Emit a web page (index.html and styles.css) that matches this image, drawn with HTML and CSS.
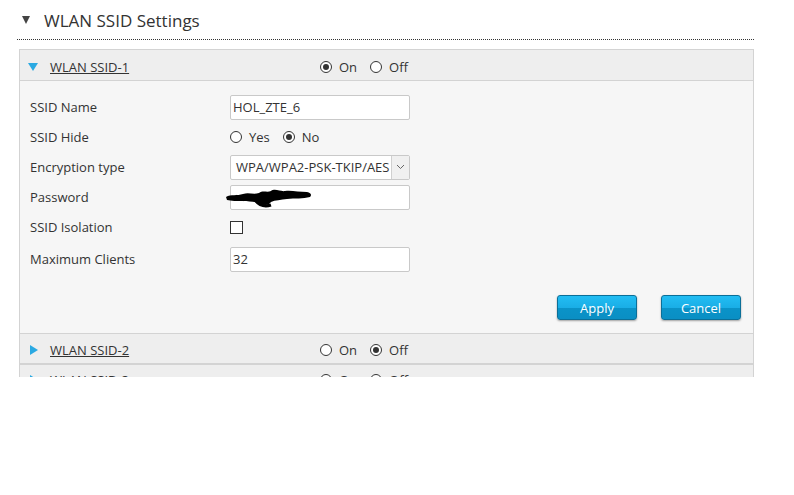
FILE: index.html
```html
<!DOCTYPE html>
<html>
<head>
<meta charset="utf-8">
<link rel="stylesheet" href="styles.css">
</head>
<body>
<div class="page">
  <div class="title">
    <span class="tri-down dark"></span>
    <span class="title-text">WLAN SSID Settings</span>
  </div>
  <div class="box">
    <div class="hdr">
      <span class="tri-down blue"></span>
      <a class="hdr-link">WLAN SSID-1</a>
      <div class="radios hdr-radios">
        <span class="radio on"></span><span class="rlabel">On</span>
        <span class="radio"></span><span class="rlabel">Off</span>
      </div>
    </div>
    <div class="content">
      <div class="row">
        <span class="label">SSID Name</span>
        <div class="field"><div class="input">HOL_ZTE_6</div></div>
      </div>
      <div class="row">
        <span class="label">SSID Hide</span>
        <div class="field radios">
          <span class="radio"></span><span class="rlabel">Yes</span>
          <span class="radio on"></span><span class="rlabel">No</span>
        </div>
      </div>
      <div class="row">
        <span class="label">Encryption type</span>
        <div class="field">
          <div class="select">
            <span class="sel-text">WPA/WPA2-PSK-TKIP/AES</span>
            <span class="sel-arrow"><svg width="9" height="6" viewBox="0 0 9 6"><path d="M1 1 L4.5 4.5 L8 1" fill="none" stroke="#666" stroke-width="1"/></svg></span>
          </div>
        </div>
      </div>
      <div class="row">
        <span class="label">Password</span>
        <div class="field pw">
          <div class="input"></div>
          <svg class="scribble" width="90" height="26" viewBox="0 0 90 26"><path d="M1 12 C6 9 12 11 18 9 C24 7 28 10 34 8 C38 5 42 8 46 6 C50 3 56 7 60 6 C66 5 74 7 82 7 C86 8 87 10 85 12 C78 14 70 13 62 14 C56 15 50 15 46 17 C44 20 40 21 36 19 C30 16 24 17 18 16 C12 16 6 16 2 15 Z" fill="#000"/><path d="M30 15 C34 20 40 22 46 20" stroke="#000" stroke-width="3" fill="none"/></svg>
        </div>
      </div>
      <div class="row">
        <span class="label">SSID Isolation</span>
        <div class="field"><span class="checkbox"></span></div>
      </div>
      <div class="row last">
        <span class="label">Maximum Clients</span>
        <div class="field"><div class="input">32</div></div>
      </div>
      <div class="buttons">
        <button class="btn">Apply</button>
        <button class="btn">Cancel</button>
      </div>
    </div>
    <div class="hdr hdr2">
      <span class="tri-right blue"></span>
      <a class="hdr-link">WLAN SSID-2</a>
      <div class="radios hdr-radios">
        <span class="radio"></span><span class="rlabel">On</span>
        <span class="radio on"></span><span class="rlabel">Off</span>
      </div>
    </div>
    <div class="hdr hdr3">
      <span class="tri-right blue"></span>
      <a class="hdr-link">WLAN SSID-3</a>
      <div class="radios hdr-radios">
        <span class="radio"></span><span class="rlabel">On</span>
        <span class="radio on"></span><span class="rlabel">Off</span>
      </div>
    </div>
  </div>
</div>
</body>
</html>
```
FILE: styles.css
```css
html, body {
  margin: 0;
  padding: 0;
  background: #fff;
}
body {
  font-family: "Open Sans", "Noto Sans", "Liberation Sans", sans-serif;
  color: #333;
  font-size: 13px;
}
.page {
  height: 377px;
  overflow: hidden;
}
.title {
  display: flex;
  align-items: center;
  height: 40px;
  margin-left: 17px;
  width: 737px;
  border-bottom: 1px dotted #333;
  box-sizing: border-box;
  padding-left: 5px;
  padding-top: 1px;
}
.title-text {
  font-size: 17px;
  margin-left: 14px;
  color: #333;
}
.tri-down {
  width: 0;
  height: 0;
  border-left: 4.5px solid transparent;
  border-right: 4.5px solid transparent;
  border-top: 8px solid #444;
  display: inline-block;
}
.tri-down.blue {
  border-left-width: 5px;
  border-right-width: 5px;
  border-top-width: 8px;
  border-top-color: #2aa9e2;
}
.tri-right {
  width: 0;
  height: 0;
  border-top: 5px solid transparent;
  border-bottom: 5px solid transparent;
  border-left: 8px solid #2aa9e2;
  display: inline-block;
}
.box {
  margin-top: 9px;
  margin-left: 19px;
  width: 735px;
  border: 1px solid #d3d3d3;
  box-sizing: border-box;
}
.hdr {
  height: 31px;
  background: #eeeeee;
  border-bottom: 1px solid #d3d3d3;
  box-sizing: border-box;
  display: flex;
  align-items: center;
  padding-left: 8px;
  padding-top: 4px;
}
.hdr2 {
  height: 31px;
  padding-top: 2px;
  border-bottom: 2px solid #d3d3d3;
}
.hdr3 {
  padding-top: 0;
}
.hdr .tri-right {
  margin-left: 2px;
}
.hdr-link {
  margin-left: 12px;
  text-decoration: underline;
  color: #333;
  width: 270px;
}
.hdr .tri-right + .hdr-link {
  margin-left: 12px;
}
.radios {
  display: flex;
  align-items: center;
}
.radio {
  width: 10px;
  height: 10px;
  border: 1px solid #333;
  border-radius: 50%;
  background: #fff;
  position: relative;
  display: inline-block;
}
.radio.on::after {
  content: "";
  position: absolute;
  left: 2px;
  top: 2px;
  width: 6px;
  height: 6px;
  border-radius: 50%;
  background: #333;
}
.rlabel {
  margin-left: 7px;
  margin-right: 13px;
}
.content {
  background: #f6f6f6;
  border-bottom: 1px solid #d3d3d3;
  padding: 11px 0 13px 10px;
}
.row {
  display: flex;
  align-items: center;
  height: 30px;
}
.row.last {
  margin-top: 2px;
}
.label {
  width: 200px;
}
.field {
  position: relative;
}
.input {
  width: 180px;
  height: 25px;
  box-sizing: border-box;
  border: 1px solid #c9c9c9;
  border-radius: 2px;
  background: #fff;
  padding-left: 2px;
  line-height: 23px;
}
.select {
  width: 180px;
  height: 25px;
  box-sizing: border-box;
  border: 1px solid #c9c9c9;
  border-radius: 2px;
  background: #fff;
  display: flex;
  align-items: center;
}
.sel-text {
  flex: 1;
  padding-left: 5px;
  white-space: nowrap;
  overflow: hidden;
}
.sel-arrow {
  width: 17px;
  height: 23px;
  border-left: 1px solid #d0d0d0;
  background: #f0f0f0;
  display: flex;
  align-items: center;
  justify-content: center;
}
.pw .scribble {
  position: absolute;
  left: -5px;
  top: 0px;
}
.checkbox {
  display: block;
  width: 11px;
  height: 11px;
  border: 1px solid #333;
  background: #fff;
}
.buttons {
  display: flex;
  justify-content: flex-end;
  gap: 24px;
  margin-top: 21px;
  padding-right: 12px;
}
.btn {
  width: 80px;
  height: 25px;
  border: 1px solid #0b6f98;
  border-radius: 3px;
  background: linear-gradient(#22bdf3 0%, #1aaee6 50%, #0a93c8 51%, #0a8fc4 100%);
  color: #fff;
  font-family: "Open Sans", "Noto Sans", "Liberation Sans", sans-serif;
  font-size: 13px;
  box-shadow: 0 1px 2px rgba(0,0,0,0.35);
  padding: 0;
}
```
